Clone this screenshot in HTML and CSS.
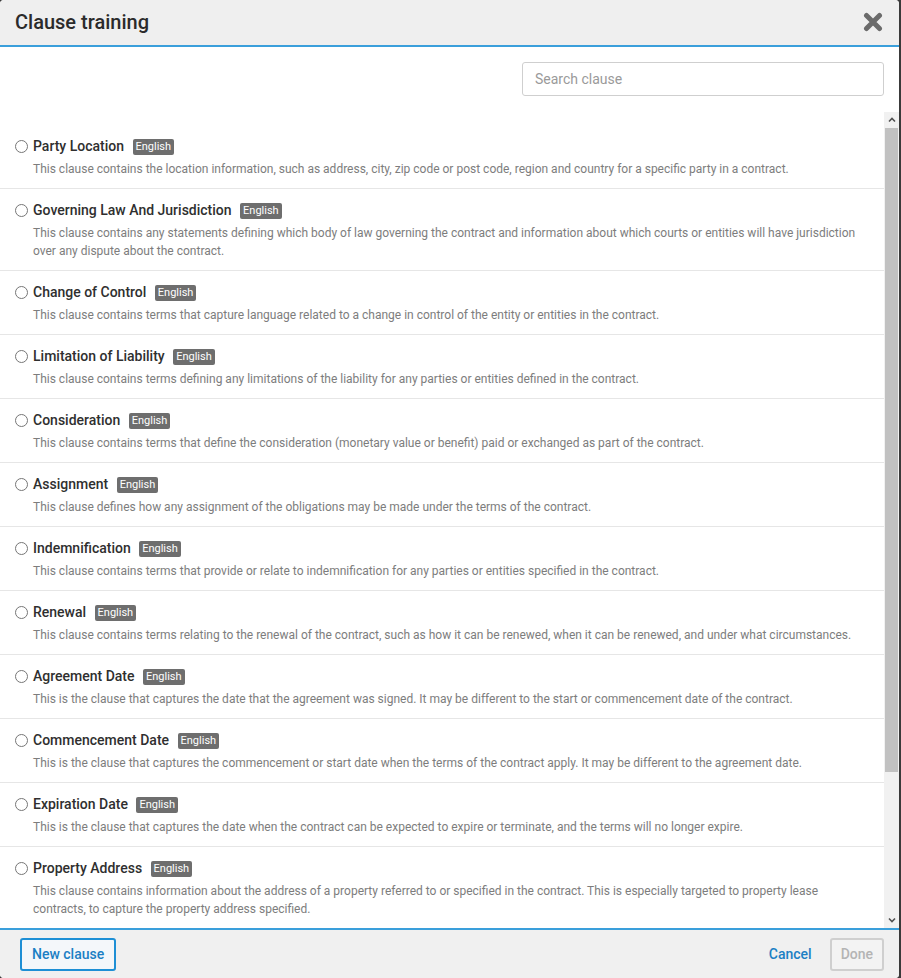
FILE: index.html
```html
<!DOCTYPE html>
<html lang="en">
  <head>
    <meta charset="UTF-8" />
    <meta name="viewport" content="width=device-width, initial-scale=1.0" />
    <title>Clause training</title>
    <link rel="stylesheet" href="styles.css">
  </head>
  <body>
    <div class="modal">
      <div class="modal-header">
        <h1 class="modal-title">Clause training</h1>
        <button class="close" title="Close">
          <svg width="20" height="20" viewBox="0 0 20 20">
            <path d="M3.5 3.5 L16.5 16.5 M16.5 3.5 L3.5 16.5" stroke="#6b6b6b" stroke-width="5" stroke-linecap="round" fill="none" />
          </svg>
        </button>
      </div>

      <div class="search-bar">
        <input type="text" class="search" placeholder="Search clause" />
      </div>

      <div class="list-wrap">
        <div class="clause-list">
          <label class="clause">
            <input type="radio" name="clause" />
            <div class="clause-body">
              <div class="clause-name">Party Location <span class="lang">English</span></div>
              <p class="clause-desc">This clause contains the location information, such as address, city, zip code or post code, region and country for a specific party in a contract.</p>
            </div>
          </label>
          <label class="clause">
            <input type="radio" name="clause" />
            <div class="clause-body">
              <div class="clause-name">Governing Law And Jurisdiction <span class="lang">English</span></div>
              <p class="clause-desc">This clause contains any statements defining which body of law governing the contract and information about which courts or entities will have jurisdiction over any dispute about the contract.</p>
            </div>
          </label>
          <label class="clause">
            <input type="radio" name="clause" />
            <div class="clause-body">
              <div class="clause-name">Change of Control <span class="lang">English</span></div>
              <p class="clause-desc">This clause contains terms that capture language related to a change in control of the entity or entities in the contract.</p>
            </div>
          </label>
          <label class="clause">
            <input type="radio" name="clause" />
            <div class="clause-body">
              <div class="clause-name">Limitation of Liability <span class="lang">English</span></div>
              <p class="clause-desc">This clause contains terms defining any limitations of the liability for any parties or entities defined in the contract.</p>
            </div>
          </label>
          <label class="clause">
            <input type="radio" name="clause" />
            <div class="clause-body">
              <div class="clause-name">Consideration <span class="lang">English</span></div>
              <p class="clause-desc">This clause contains terms that define the consideration (monetary value or benefit) paid or exchanged as part of the contract.</p>
            </div>
          </label>
          <label class="clause">
            <input type="radio" name="clause" />
            <div class="clause-body">
              <div class="clause-name">Assignment <span class="lang">English</span></div>
              <p class="clause-desc">This clause defines how any assignment of the obligations may be made under the terms of the contract.</p>
            </div>
          </label>
          <label class="clause">
            <input type="radio" name="clause" />
            <div class="clause-body">
              <div class="clause-name">Indemnification <span class="lang">English</span></div>
              <p class="clause-desc">This clause contains terms that provide or relate to indemnification for any parties or entities specified in the contract.</p>
            </div>
          </label>
          <label class="clause">
            <input type="radio" name="clause" />
            <div class="clause-body">
              <div class="clause-name">Renewal <span class="lang">English</span></div>
              <p class="clause-desc">This clause contains terms relating to the renewal of the contract, such as how it can be renewed, when it can be renewed, and under what circumstances.</p>
            </div>
          </label>
          <label class="clause">
            <input type="radio" name="clause" />
            <div class="clause-body">
              <div class="clause-name">Agreement Date <span class="lang">English</span></div>
              <p class="clause-desc">This is the clause that captures the date that the agreement was signed. It may be different to the start or commencement date of the contract.</p>
            </div>
          </label>
          <label class="clause">
            <input type="radio" name="clause" />
            <div class="clause-body">
              <div class="clause-name">Commencement Date <span class="lang">English</span></div>
              <p class="clause-desc">This is the clause that captures the commencement or start date when the terms of the contract apply. It may be different to the agreement date.</p>
            </div>
          </label>
          <label class="clause">
            <input type="radio" name="clause" />
            <div class="clause-body">
              <div class="clause-name">Expiration Date <span class="lang">English</span></div>
              <p class="clause-desc">This is the clause that captures the date when the contract can be expected to expire or terminate, and the terms will no longer expire.</p>
            </div>
          </label>
          <label class="clause">
            <input type="radio" name="clause" />
            <div class="clause-body">
              <div class="clause-name">Property Address <span class="lang">English</span></div>
              <p class="clause-desc">This clause contains information about the address of a property referred to or specified in the contract. This is especially targeted to property lease contracts, to capture the property address specified.</p>
            </div>
          </label>
        </div>

        <!-- list scrollbar -->
        <div class="scrollbar">
          <div class="scroll-btn">
            <svg width="8" height="6" viewBox="0 0 8 6"><path d="M1 4.5 L4 1.5 L7 4.5" stroke="#505050" stroke-width="1.6" fill="none" /></svg>
          </div>
          <div class="scroll-track">
            <div class="scroll-thumb"></div>
          </div>
          <div class="scroll-btn">
            <svg width="8" height="6" viewBox="0 0 8 6"><path d="M1 1.5 L4 4.5 L7 1.5" stroke="#505050" stroke-width="1.6" fill="none" /></svg>
          </div>
        </div>
      </div>

      <div class="modal-footer">
        <button class="btn btn-outline">New clause</button>
        <div class="footer-right">
          <button class="btn btn-link">Cancel</button>
          <button class="btn btn-disabled" disabled>Done</button>
        </div>
      </div>
    </div>
  </body>
</html>
```

FILE: styles.css
```css
* {
  box-sizing: border-box;
}
body {
  margin: 0;
  font-family: Roboto, "Liberation Sans", Arial, sans-serif;
  background-color: #3a3a3a;
}
.modal {
  width: 899px;
  height: 978px;
  background-color: #fff;
  border-radius: 4px;
  display: flex;
  flex-direction: column;
  overflow: hidden;
}

/* header */
.modal-header {
  height: 47px;
  flex-shrink: 0;
  background-color: #efefef;
  border-bottom: 2px solid #3a9fdb;
  display: flex;
  align-items: center;
  justify-content: space-between;
  padding: 0 16px 2px 15px;
}
.modal-title {
  margin: 0;
  font-size: 20px;
  font-weight: 500;
  color: #2b2b2b;
}
.close {
  border: none;
  background: none;
  padding: 0;
  width: 20px;
  height: 20px;
  cursor: pointer;
}

/* search */
.search-bar {
  display: flex;
  justify-content: flex-end;
  padding: 15px 15px 16px 0;
}
.search {
  width: 362px;
  height: 34px;
  border: 1px solid #cfcfcf;
  border-radius: 3px;
  padding: 0 12px;
  font-family: inherit;
  font-size: 14px;
  color: #333;
}
.search::placeholder {
  color: #9a9a9a;
}

/* clause list */
.list-wrap {
  flex: 1;
  min-height: 0;
  display: flex;
}
.clause-list {
  flex: 1;
  overflow: hidden;
  padding-top: 13px;
}
.clause {
  display: flex;
  align-items: flex-start;
  padding: 11px 26px 10px 15px;
  border-bottom: 1px solid #e6e6e6;
  cursor: pointer;
}
.clause:last-child {
  border-bottom: none;
}
.clause input {
  width: 13px;
  height: 13px;
  margin: 4px 5px 0 0;
  flex-shrink: 0;
}
.clause-body {
  flex: 1;
}
.clause-name {
  font-size: 14px;
  font-weight: 500;
  line-height: 20px;
  color: #2f2f2f;
}
.lang {
  display: inline-block;
  margin-left: 5px;
  padding: 0 3px;
  font-size: 11px;
  line-height: 16px;
  font-weight: 400;
  color: #fff;
  background-color: #6e6e6e;
  border-radius: 2px;
  vertical-align: 1px;
}
.clause-desc {
  margin: 4px 0 0;
  font-size: 12px;
  line-height: 18px;
  color: #7d7d7d;
}

/* scrollbar */
.scrollbar {
  width: 15px;
  display: flex;
  flex-direction: column;
  background-color: #f1f1f1;
}
.scroll-btn {
  height: 16px;
  display: flex;
  align-items: center;
  justify-content: center;
}
.scroll-track {
  flex: 1;
}
.scroll-thumb {
  height: 644px;
  margin: 0 1px;
  background-color: #c1c1c1;
}

/* footer */
.modal-footer {
  height: 50px;
  flex-shrink: 0;
  background-color: #f0f0f0;
  border-top: 2px solid #3a9fdb;
  display: flex;
  align-items: center;
  justify-content: space-between;
  padding: 0 15px 0 20px;
}
.footer-right {
  display: flex;
  align-items: center;
  gap: 18px;
}
.btn {
  height: 33px;
  font-family: inherit;
  font-size: 14px;
  font-weight: 500;
  border-radius: 3px;
  padding: 0 10px;
  cursor: pointer;
}
.btn-outline {
  border: 2px solid #1e8fd5;
  background-color: #f4f7fa;
  color: #1b7fc4;
}
.btn-link {
  border: none;
  background: none;
  padding: 0;
  color: #1b7fc4;
}
.btn-disabled {
  border: 2px solid #cfcfcf;
  background-color: #f3f3f3;
  color: #b4b4b4;
  padding: 0 9px;
  cursor: default;
}
```
